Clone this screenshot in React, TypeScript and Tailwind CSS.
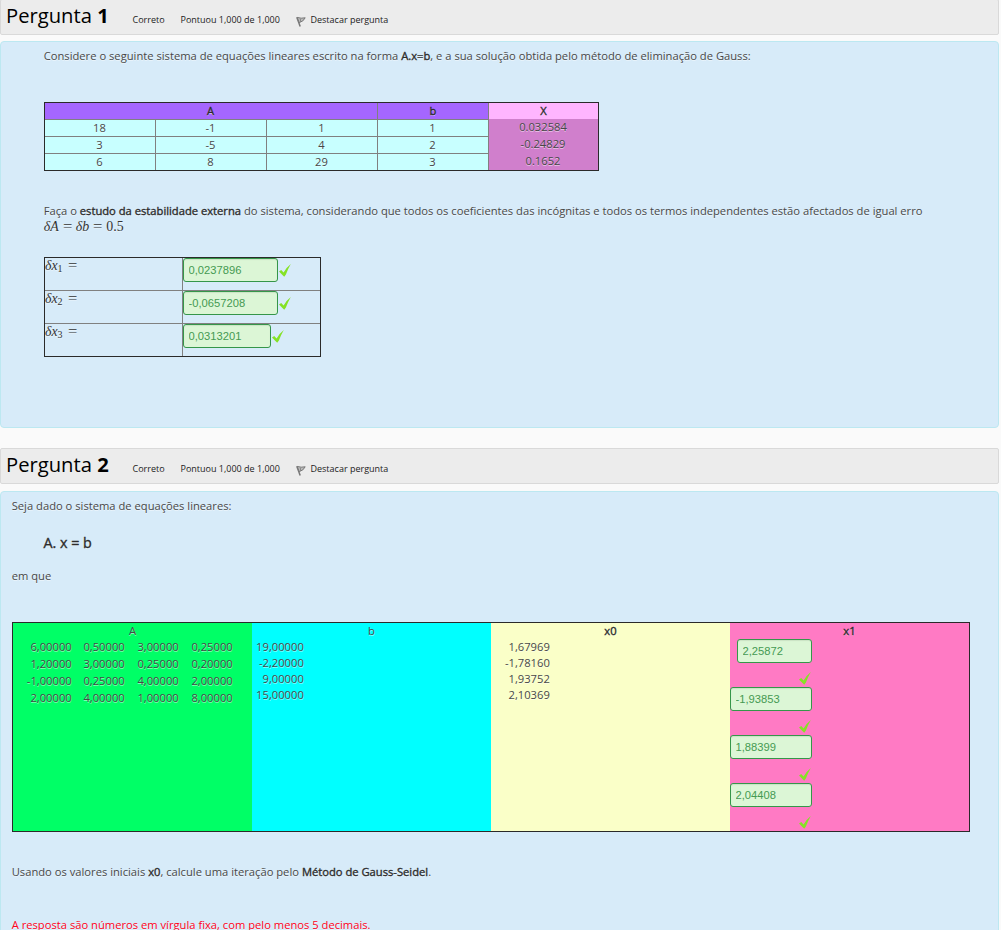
import type { ReactNode } from "react";

const bold = "font-normal text-[#2c2c2c] [-webkit-text-stroke:0.35px_#2c2c2c]";

function Check({ className = "" }: { className?: string }) {
  return (
    <svg viewBox="0 0 12 13" className={`h-[13px] w-[12px] shrink-0 ${className}`}>
      <path d="M0 7.4 L2.2 6 L4.6 8.6 Q7.2 3.6 11.8 0 Q8.8 5.2 6.9 10.4 L5.2 12.8 Z" fill="#85e225" />
    </svg>
  );
}

function Flag() {
  return (
    <svg viewBox="0 0 11 11" className="mt-[3px] h-[11px] w-[11px]" fill="none">
      <path d="M0.8 1.2 L4.2 10.4" stroke="#777" strokeWidth="1.5" />
      <path d="M1.2 1.4 Q5 2.8 9.2 1.8 Q7.4 5.6 3.2 6.6 Z" stroke="#777" strokeWidth="1" fill="#bbb" />
      <path d="M4.4 3 L4.6 6" stroke="#888" />
    </svg>
  );
}

function Header({ n }: { n: number }) {
  return (
    <header className="flex h-9 w-[999px] rounded-[2px] border border-[#d9d9d9] bg-[#ececec] text-[9px] text-[#222]">
      <h3 className="w-[126px] pl-[5px] text-[20.2px] leading-[31px] text-black">
        Pergunta <b>{n}</b>
      </h3>
      <span className="w-12 pl-[5.5px] leading-[40px]">Correto</span>
      <span className="w-[121px] pl-[5.5px] leading-[40px]">Pontuou 1,000 de 1,000</span>
      <span className="flex h-[40px] items-center">
        <Flag />
      </span>
      <span className="pl-[3.5px] leading-[40px]">Destacar pergunta</span>
    </header>
  );
}

function Answer({ value, className }: { value: string; className: string }) {
  return (
    <input
      readOnly
      value={value}
      className={`block h-6 rounded-[3px] border border-[#35964a] bg-[#dcf6d6] px-[4.5px] font-['Liberation_Sans',sans-serif] text-[11.2px] text-[#459a52] shadow-[inset_0_1px_1px_rgba(0,0,0,0.08)] outline-none ${className}`}
    />
  );
}

function Delta({ i }: { i: number }) {
  return (
    <span className="font-['Liberation_Serif',serif] text-[13.8px]">
      <i>δx</i>
      <sub className="relative bottom-auto top-[2px] align-baseline text-[10px]">{i}</sub>
      <Equals className="ml-[5px]" />
    </span>
  );
}

function Equals({ className = "" }: { className?: string }) {
  return <span className={`inline-block origin-left scale-x-[1.2] pr-[1.5px] ${className}`}>=</span>;
}

function Numbers({ values, className, pitch = "leading-[16px]" }: { values: string[]; className: string; pitch?: string }) {
  return (
    <div className={`text-right ${pitch} ${className}`}>
      {values.map((v) => (
        <div key={v}>{v}</div>
      ))}
    </div>
  );
}

function Column({ title, className, children }: { title: ReactNode; className: string; children: ReactNode }) {
  return (
    <div className={className}>
      <div className="h-4 text-center leading-[16px]">{title}</div>
      {children}
    </div>
  );
}

const system = [
  ["18", "-1", "1", "1"],
  ["3", "-5", "4", "2"],
  ["6", "8", "29", "3"],
];

const deltas = [
  { v: "0,0237896", w: "w-[95px]" },
  { v: "-0,0657208", w: "w-[95px]" },
  { v: "0,0313201", w: "w-[88px]" },
];

const results = [
  { v: "2,25872", w: "w-[75px] ml-[7px]" },
  { v: "-1,93853", w: "w-[82px]" },
  { v: "1,88399", w: "w-[82px]" },
  { v: "2,04408", w: "w-[82px]" },
];

const panel =
  "w-[999px] rounded-[4px] border border-[#bce8f1] bg-[#d7ebf9] text-[11.2px] leading-[16px] text-[#484848] [text-shadow:0_1px_0_rgba(255,255,255,0.5)]";

export default function App() {
  return (
    <main className="h-[930px] w-[1001px] overflow-hidden bg-[#fafafa] font-['Open_Sans',sans-serif]">
      <div className="-mt-px">
        <Header n={1} />
      </div>
      <section className={`mt-[6px] h-[387px] pl-[43px] pt-[6px] ${panel}`}>
        <p className="-ml-[0.3px] whitespace-nowrap">
          Considere o seguinte sistema de equações lineares escrito na forma <b className={bold}>A.x=b</b>, e a sua
          solução obtida pelo método de eliminação de Gauss:
        </p>

        <div className="mt-[38px] flex h-[69px] w-[555px] border border-[#2a2a2a] text-center">
          <div className="w-[444px]">
            <div className="grid h-4 grid-cols-[333px_111px] bg-[#a566ff]">
              <div className={`border-r border-[#808080] pr-px ${bold}`}>A</div>
              <div className={`border-r border-[#808080] ${bold}`}>b</div>
            </div>
            {system.map((row) => (
              <div key={row[0]} className="grid h-[17px] grid-cols-4 border-t border-[#808080] bg-[#c8ffff]">
                {row.map((c, i) => (
                  <div key={i} className="border-r border-[#808080] pr-px">
                    {c}
                  </div>
                ))}
              </div>
            ))}
          </div>
          <div className="w-[109px] bg-[#d07fcc]">
            <div className={`h-4 bg-[#ffb5ff] ${bold}`}>X</div>
            <div className="h-[51px] pr-px">
              <div className="h-[17px]">0.032584</div>
              <div className="h-[17px]">-0.24829</div>
              <div className="h-[17px]">0.1652</div>
            </div>
          </div>
        </div>

        <p className="-ml-[0.3px] mt-8 whitespace-nowrap">
          Faça o <b className={bold}>estudo da estabilidade externa</b> do sistema, considerando que todos os
          coeficientes das incógnitas e todos os termos independentes estão afectados de igual erro
        </p>
        <p className="-ml-[0.3px] whitespace-nowrap font-['Liberation_Serif',serif] text-[13.9px] text-[#333] [word-spacing:0.4px]">
          <i>δA</i> <Equals /> <i>δb</i> <Equals /> 0.5
        </p>

        <div className="mt-[22px] h-[100px] w-[277px] divide-y divide-[#808080] border border-[#2a2a2a]">
          {deltas.map((d, i) => (
            <div key={d.v} className={`grid grid-cols-[138px_137px] ${i < 2 ? "h-[33px]" : "h-8"}`}>
              <div className="border-r border-[#808080] text-[#333]">
                <Delta i={i + 1} />
              </div>
              <div className="flex">
                <Answer value={d.v} className={d.w} />
                <Check className="ml-[0.5px] mt-[6px]" />
              </div>
            </div>
          ))}
        </div>
      </section>

      <div className="mt-5">
        <Header n={2} />
      </div>
      <section className={`mt-[7px] h-[500px] pl-[11px] pt-[6px] ${panel}`}>
        <p className="-ml-[0.3px]">Seja dado o sistema de equações lineares:</p>
        <p className={`ml-[31.5px] mt-[19px] text-[14.3px] leading-[20px] ${bold}`}>A. x = b</p>
        <p className="-ml-[0.3px] mt-[15px]">em que</p>

        <div className="mt-[38px] grid h-[210px] w-[958px] grid-cols-4 border border-[#2a2a2a]">
          <Column title="A" className="bg-[#00ff66]">
            <div className="-mt-px flex">
              <Numbers className="w-[58.7px]" pitch="leading-[17px]" values={["6,00000", "1,20000", "-1,00000", "2,00000"]} />
              <Numbers className="w-[53px]" pitch="leading-[17px]" values={["0,50000", "3,00000", "0,25000", "4,00000"]} />
              <Numbers className="w-[54px]" pitch="leading-[17px]" values={["3,00000", "0,25000", "4,00000", "1,00000"]} />
              <Numbers className="w-[54px]" pitch="leading-[17px]" values={["0,25000", "0,20000", "2,00000", "8,00000"]} />
            </div>
          </Column>
          <Column title="b" className="bg-[#00ffff]">
            <Numbers className="w-[51.8px]" values={["19,00000", "-2,20000", "9,00000", "15,00000"]} />
          </Column>
          <Column title={<b className={bold}>x0</b>} className="bg-[#faffc8]">
            <Numbers className="w-[58.8px]" values={["1,67969", "-1,78160", "1,93752", "2,10369"]} />
          </Column>
          <Column title={<b className={bold}>x1</b>} className="bg-[#ff7ac4]">
            {results.map((r) => (
              <div key={r.v} className="h-12 w-[82px]">
                <Answer value={r.v} className={r.w} />
                <Check className="ml-[69px] mt-[9px]" />
              </div>
            ))}
          </Column>
        </div>

        <p className="-ml-[0.3px] mt-8">
          Usando os valores iniciais <b className={bold}>x0</b>, calcule uma iteração pelo{" "}
          <b className={bold}>Método de Gauss-Seidel</b>.
        </p>
        <p className="-ml-[0.3px] mt-[37px] text-[#ff0020]">
          A resposta são números em vírgula fixa, com pelo menos 5 decimais.
        </p>
      </section>
    </main>
  );
}
